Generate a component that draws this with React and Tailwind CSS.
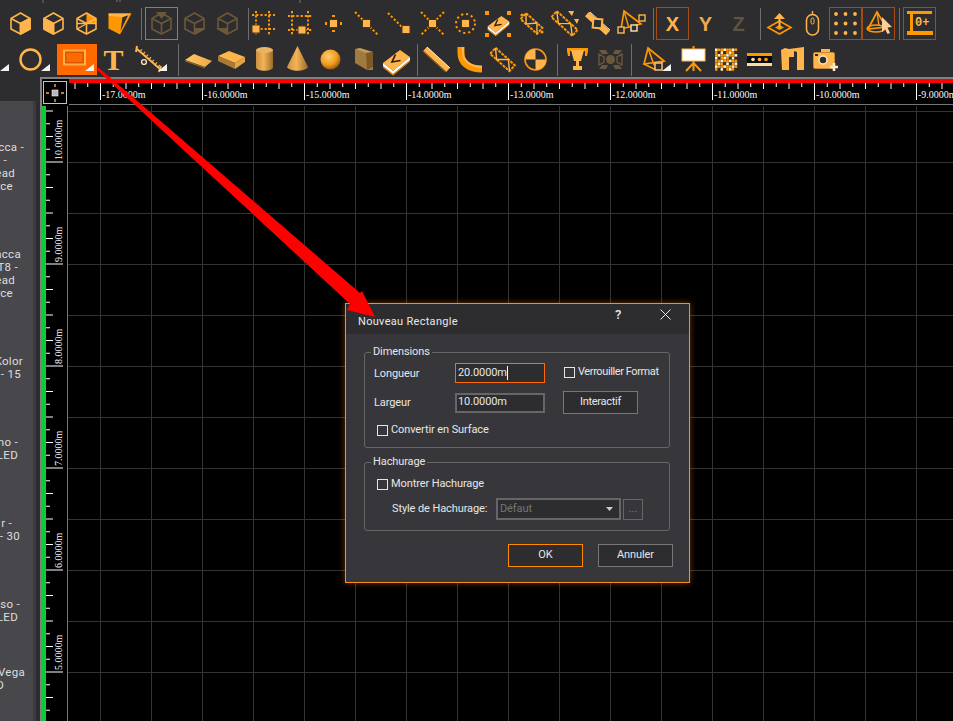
import React from 'react';

const L = '#ffb54c';
const O = '#ff9800';
const Dim = '#6b5838';

function Svg({ children, size = 33 }) {
  return (
    <svg width={size} height={size} viewBox="0 0 33 33" className="shrink-0" fill="none">
      {children}
    </svg>
  );
}

function Sq({ cx = 16.5, cy = 16.5, s = 8, fill = L }) {
  return <rect x={cx - s / 2} y={cy - s / 2} width={s} height={s} fill={fill} stroke="#4a3414" strokeWidth="1" />;
}

function Dots({ x1, y1, x2, y2, w = 2 }) {
  return <line x1={x1} y1={y1} x2={x2} y2={y2} stroke={O} strokeWidth={w} strokeDasharray="2.2 2" />;
}

function Cube({ left, right, color = L, w = 1.6 }) {
  return (
    <g stroke={color} strokeWidth={w} strokeLinejoin="round">
      {left && <polygon points="7,11.5 16.5,16.5 16.5,27 7,22" fill={color} />}
      {right && <polygon points="26,11.5 16.5,16.5 16.5,27 26,22" fill={color} />}
      <polygon points="16.5,6 26,11.5 26,22 16.5,27 7,22 7,11.5" />
      <polyline points="7,11.5 16.5,16.5 26,11.5" />
      <line x1="16.5" y1="16.5" x2="16.5" y2="27" />
    </g>
  );
}

const CubeRight = () => <Svg><Cube right /></Svg>;
const CubeLeft = () => <Svg><Cube left /></Svg>;
const CubeWire = () => (
  <Svg>
    <polygon points="16.5,6 26,11.5 26,16.5 16.5,16.5" fill={O} />
    <Cube />
    <line x1="7" y1="22" x2="26" y2="11.5" stroke={L} strokeWidth="1.4" />
    <line x1="7" y1="16.5" x2="26" y2="16.5" stroke={L} strokeWidth="1.4" />
  </Svg>
);
const CubeSolid = () => (
  <Svg>
    <polygon points="5.5,6.5 28.5,6.5 17,27.5 5.5,21.5" fill={O} />
    <polygon points="25,8.5 17.5,24 19.5,10" fill="#2d2d30" />
    <polygon points="5.5,6.5 28.5,6.5 19.5,10 6,9" fill={L} />
  </Svg>
);
const CubeTop = () => (
  <Svg>
    <Cube color={Dim} />
    <polygon points="11,5 22,5 16.5,12" fill={Dim} />
  </Svg>
);
const CubeFront = () => (
  <Svg>
    <Cube color={Dim} />
    <polygon points="17,21 28,21 17,28" fill={Dim} />
  </Svg>
);
const CubeBack = () => (
  <Svg>
    <g transform="translate(33 0) scale(-1 1)">
      <Cube color={Dim} />
      <polygon points="17,21 28,21 17,28" fill={Dim} />
    </g>
  </Svg>
);

const HandleA = () => (
  <Svg>
    <Dots x1="6" y1="8" x2="29" y2="8" />
    <Dots x1="10" y1="4" x2="10" y2="29" />
    <Dots x1="23" y1="4" x2="23" y2="29" />
    <Dots x1="6" y1="22" x2="29" y2="22" />
    <Sq cx="10" cy="22" s="8" />
  </Svg>
);
const HandleB = () => (
  <Svg>
    <Dots x1="4" y1="9" x2="28" y2="9" />
    <Dots x1="8" y1="4" x2="8" y2="29" />
    <Dots x1="24" y1="4" x2="24" y2="29" />
    <Dots x1="4" y1="23" x2="28" y2="23" />
    <Sq cx="18" cy="23" s="8" />
  </Svg>
);
const HandleCenter = () => (
  <Svg>
    <Sq />
    <rect x="15" y="8" width="3" height="2" fill={O} />
    <rect x="15" y="23" width="3" height="2" fill={O} />
    <rect x="8" y="15" width="2" height="3" fill={O} />
    <rect x="23" y="15" width="2" height="3" fill={O} />
  </Svg>
);
const HandleDiag = () => (
  <Svg>
    <Dots x1="5" y1="5" x2="28" y2="28" />
    <Sq />
  </Svg>
);
const HandleEnd = () => (
  <Svg>
    <Dots x1="5" y1="6" x2="20" y2="21" />
    <Sq cx="23" cy="22.5" />
  </Svg>
);
const HandleX = () => (
  <Svg>
    <Dots x1="5" y1="5" x2="28" y2="28" />
    <Dots x1="28" y1="5" x2="5" y2="28" />
    <Sq />
  </Svg>
);
const HandleRing = () => (
  <Svg>
    <circle cx="16.5" cy="16.5" r="9.5" stroke={O} strokeWidth="2" strokeDasharray="2.2 2.8" />
    <Sq />
  </Svg>
);

function BookShape() {
  return (
    <g>
      <polygon points="3,20 20,7 30,14 13,28" fill={L} />
      <polygon points="3,20 13,28 30,14 30,17 13,31 3,23" fill="#fff" />
      <polygon points="3,23 13,31 30,17 30,18.5 13,32.5 3,24.5" fill={O} />
      <path d="M15.5 11.5 L12 19 L20.5 17.5" stroke="#2a2010" strokeWidth="1.7" />
    </g>
  );
}
const Book = () => <Svg><BookShape /></Svg>;
const BookHandles = () => (
  <Svg>
    <g transform="translate(3.3 3.3) scale(0.8)"><BookShape /></g>
    <rect x="3" y="4" width="4" height="4" fill={O} />
    <rect x="25" y="4" width="4" height="4" fill={O} />
    <rect x="3" y="26" width="4" height="4" fill={O} />
    <rect x="25" y="26" width="4" height="4" fill={O} />
  </Svg>
);

function TrussShape({ len = 13 }) {
  return (
    <g transform="rotate(42 16.5 16.5)">
      <rect x={16.5 - len} y="12.5" width={len * 2} height="8" stroke={O} strokeWidth="2" strokeDasharray="3 1" />
      <path d={`M${16.5 - len} 12.5 L${16.5 - len / 3} 20.5 L${16.5 + len / 3} 12.5 L${16.5 + len} 20.5`} stroke={L} strokeWidth="1.4" />
    </g>
  );
}
const TrussDots = () => (
  <Svg>
    <TrussShape len={11} />
    <circle cx="7" cy="8" r="1.6" fill={O} />
    <circle cx="27" cy="25" r="1.6" fill={O} />
  </Svg>
);
const TrussArrows = () => (
  <Svg>
    <TrussShape len={14} />
    <polygon points="20,4 26,4 24,9" fill={L} />
    <polygon points="26,12 31,12 29,17" fill={L} />
  </Svg>
);
const BeamDiamond = () => (
  <Svg>
    <line x1="6" y1="7" x2="27" y2="26" stroke={L} strokeWidth="6" />
    <line x1="9" y1="5" x2="29" y2="23" stroke="#fff2c8" strokeWidth="1" />
    <rect x="12" y="12" width="9" height="9" fill="#2d2d30" stroke={L} strokeWidth="2" transform="rotate(5 16.5 16.5)" />
  </Svg>
);
const PyramidNodes = () => (
  <Svg>
    <polygon points="10,4 27,17 7,22" stroke={O} strokeWidth="1.6" />
    <line x1="10" y1="4" x2="15" y2="21" stroke={O} strokeWidth="1.4" />
    <rect x="4" y="20" width="6" height="6" fill="#2d2d30" stroke={L} strokeWidth="1.4" />
    <rect x="17" y="18" width="6" height="6" fill="#2d2d30" stroke="#ffe0b0" strokeWidth="1.4" />
    <rect x="25" y="8" width="6" height="6" fill="#2d2d30" stroke={L} strokeWidth="1.4" />
  </Svg>
);
const MoveUp = () => (
  <Svg>
    <polygon points="16.5,14 28,20.5 16.5,27 5,20.5" stroke={O} strokeWidth="1.6" />
    <polygon points="12,20.5 16.5,18 21,20.5 16.5,23" fill={O} />
    <polygon points="16.5,6 22,12 11,12" fill={L} />
    <line x1="16.5" y1="11" x2="16.5" y2="20" stroke={L} strokeWidth="2" />
  </Svg>
);
const Mouse = () => (
  <Svg>
    <rect x="10.5" y="7.5" width="12" height="20.5" rx="6" stroke={L} strokeWidth="1.5" />
    <line x1="16.5" y1="4" x2="16.5" y2="8" stroke={L} strokeWidth="1.4" />
    <rect x="15" y="11" width="3" height="6" rx="1.5" stroke={L} strokeWidth="1" />
  </Svg>
);
const DotGrid = () => (
  <Svg>
    {[7, 16.5, 26].map((y) =>
      [7, 16.5, 26].map((x) => <circle key={`${x}-${y}`} cx={x} cy={y} r="1.9" fill={L} />)
    )}
  </Svg>
);
const PyramidCursor = () => (
  <Svg>
    <polygon points="15,5 24,20 6,22" stroke={O} strokeWidth="1.7" />
    <ellipse cx="14" cy="21.5" rx="9" ry="3.5" stroke={O} strokeWidth="1.4" />
    <line x1="15" y1="5" x2="17" y2="19" stroke={O} strokeWidth="1.4" />
    <polygon points="20,10 30,20 25.5,20.5 28,26 25.5,27 23,22 20,25" fill="#ffcf9a" />
  </Svg>
);
const Counter = () => (
  <Svg>
    <rect x="4" y="4" width="25" height="3" fill={O} />
    <rect x="4" y="24" width="26" height="4" fill={O} />
    <rect x="7" y="7" width="3" height="17" fill={O} />
    <text x="12" y="19" fill={L} fontSize="12" fontWeight="700" fontFamily="Liberation Mono, monospace">0+</text>
  </Svg>
);
const Ring = () => (
  <Svg><circle cx="16.5" cy="16.5" r="10" stroke={L} strokeWidth="2.4" /></Svg>
);
const RectTool = () => (
  <svg width="40" height="31" viewBox="0 0 40 31" fill="none">
    <rect x="7.5" y="7" width="20" height="13" stroke={L} strokeWidth="1.4" />
    <rect x="8.8" y="8.2" width="17.4" height="10.6" fill="#ff6a00" stroke="#c74e00" strokeWidth="1" />
    <rect x="6.5" y="6" width="22" height="15" stroke="#ffae55" strokeWidth="1" />
  </svg>
);
const Measure = () => (
  <Svg>
    <line x1="5" y1="6" x2="28" y2="26" stroke={L} strokeWidth="2" />
    {[0, 1, 2, 3, 4, 5, 6].map((i) => (
      <line key={i} x1={8 + i * 3} y1={8.6 + i * 2.6} x2={10 + i * 3} y2={6.4 + i * 2.6} stroke={L} strokeWidth="1.2" />
    ))}
    <circle cx="12" cy="19" r="2.4" stroke="#ffe0b0" strokeWidth="1.4" />
    <line x1="5" y1="3" x2="4" y2="9" stroke={L} strokeWidth="2" />
    <line x1="29" y1="23" x2="27" y2="29" stroke={L} strokeWidth="2" />
  </Svg>
);
const Plate = () => (
  <Svg>
    <polygon points="3,17 12,11 30,18 23,24" fill="url(#plate)" />
    <polygon points="3,17 23,24 23,25.5 3,18.5" fill="#8a6426" />
  </Svg>
);
const Slab = () => (
  <Svg>
    <polygon points="3,13 14,8 30,14 20,20" fill={L} />
    <polygon points="3,13 20,20 20,26 3,18" fill="#a77b31" />
    <polygon points="20,20 30,14 30,19 20,26" fill="#e3a347" />
  </Svg>
);
const Cylinder = () => (
  <Svg>
    <path d="M8 7 V24 C8 29 25 29 25 24 V7 Z" fill="url(#cyl)" />
    <ellipse cx="16.5" cy="7" rx="8.5" ry="3" fill="#e9b465" />
  </Svg>
);
const Cone = () => (
  <Svg>
    <path d="M16.5 3 L27 24 C24 29 9 29 6 24 Z" fill="url(#cyl)" />
  </Svg>
);
const Sphere = () => (
  <Svg><circle cx="16.5" cy="16.5" r="10" fill="url(#sph)" /></Svg>
);
const Wall = () => (
  <Svg>
    <polygon points="8,6 26,9 26,27 20,27 8,20" fill="#a07a3f" />
    <polygon points="8,6 13,5 26,9 19,10" fill="#c59a57" />
    <polygon points="19,10 26,9 26,24 20,27" fill="#7b5a28" />
  </Svg>
);
const BeamLine = () => (
  <Svg>
    <line x1="5" y1="6" x2="28" y2="27" stroke={L} strokeWidth="6" />
    <line x1="7" y1="4" x2="30" y2="25" stroke="#ffe8bc" strokeWidth="1" />
    <line x1="3" y1="8" x2="26" y2="29" stroke="#8a5e18" strokeWidth="1.2" />
  </Svg>
);
const BeamCurve = () => (
  <Svg>
    <path d="M8 4 V10 C8 20 16 26 29 26" stroke={O} strokeWidth="7" />
    <path d="M10 4 V10 C10 18 18 24 29 24" stroke={L} strokeWidth="2" />
  </Svg>
);
const Quadrants = () => (
  <Svg>
    <circle cx="16.5" cy="16.5" r="10.5" stroke={O} strokeWidth="1.6" />
    <path d="M16.5 6 A10.5 10.5 0 0 0 6 16.5 H16.5 Z" fill={L} />
    <path d="M16.5 16.5 H27 A10.5 10.5 0 0 1 16.5 27 Z" fill={L} />
  </Svg>
);
const Trophy = () => (
  <Svg>
    <rect x="6" y="5" width="21" height="3" fill={O} />
    <path d="M6 8 H9 V13 H7 Z M27 8 H24 V13 H26 Z" fill={O} />
    <path d="M10 7 H23 L20 18 H13 Z" fill={L} />
    <rect x="15" y="18" width="3" height="5" fill={L} />
    <rect x="12" y="23" width="9" height="4" fill={L} />
  </Svg>
);
const SpotDim = () => (
  <Svg>
    <circle cx="16.5" cy="16.5" r="4.5" fill={Dim} />
    <path d="M5 7 H12 L14 11 H8 Z M28 7 H21 L19 11 H25 Z M5 26 H12 L14 22 H8 Z M28 26 H21 L19 22 H25 Z" fill={Dim} />
    <path d="M5 11 L10 14 V19 L5 22 Z M28 11 L23 14 V19 L28 22 Z" stroke={Dim} strokeWidth="1.4" />
  </Svg>
);
const PyramidSquare = () => (
  <Svg>
    <polygon points="10,5 26,18 6,21" stroke={O} strokeWidth="1.7" />
    <line x1="10" y1="5" x2="16" y2="22" stroke={O} strokeWidth="1.5" />
    <path d="M6 21 L16 26 L26 18" stroke={O} strokeWidth="1.5" />
    <rect x="17" y="20" width="7" height="7" fill="#2d2d30" stroke="#ffc070" strokeWidth="1.5" />
  </Svg>
);
const Easel = () => (
  <Svg>
    <rect x="5" y="6" width="23" height="12" fill="#fff" stroke={L} strokeWidth="1" />
    <rect x="15.5" y="3" width="2" height="3" fill={O} />
    <path d="M16.5 18 V28 M16.5 20 L9 28 M16.5 20 L24 28" stroke={O} strokeWidth="2" />
  </Svg>
);
const Mesh = () => (
  <Svg>
    {[0, 1, 2, 3, 4, 5, 6, 7].map((y) =>
      [0, 1, 2, 3, 4, 5, 6, 7].map((x) => (
        <rect
          key={`${x}-${y}`}
          x={5 + x * 2.8}
          y={5.5 + y * 2.8}
          width="2.6"
          height="2.6"
          fill={(x + y) % 3 === 0 ? '#fff2d6' : (x * y) % 2 === 0 ? O : '#3a2a12'}
        />
      ))
    )}
  </Svg>
);
const LedStrip = () => (
  <Svg>
    <rect x="4" y="10" width="25" height="3" fill={O} />
    <rect x="4" y="13" width="25" height="7" fill="#0a0a0a" />
    <rect x="4" y="20" width="25" height="3" fill="#ffd9a0" />
    <circle cx="10" cy="16.5" r="1.8" fill="#ffe3b0" />
    <circle cx="16.5" cy="16.5" r="1.8" fill={L} />
    <circle cx="23" cy="16.5" r="1.8" fill={O} />
  </Svg>
);
const Arch = () => (
  <Svg>
    <path d="M5 7 L9 5 L13 6 V27 H6 Z" fill={L} />
    <path d="M13 6 L28 4 V27 H21 V9 L18 8 V14 H13 Z" fill={L} />
  </Svg>
);
const Camera = () => (
  <Svg>
    <rect x="4" y="9" width="22" height="17" rx="2" fill={L} stroke="#3a2a12" strokeWidth="0.6" />
    <rect x="12" y="6" width="9" height="3" fill={L} />
    <circle cx="14" cy="17" r="4" fill="#2d2d30" stroke="#ffe6c0" strokeWidth="1.5" />
    <rect x="6" y="11" width="3" height="2" fill="#2d2d30" />
    <path d="M25 20 V28 M21 24 H29" stroke="#ffe9cc" strokeWidth="2.6" />
  </Svg>
);

function B({ children, boxed, grey }) {
  return (
    <div
      className={
        'relative w-[33px] h-[33px] shrink-0 flex items-center justify-center ' +
        (boxed ? 'border border-[#a8490f] ' : '') +
        (grey ? 'border border-[#808080] ' : '')
      }
    >
      {children}
    </div>
  );
}

function Corner({ className }) {
  return (
    <svg width="9" height="7" viewBox="0 0 9 7" className={'absolute ' + className}>
      <polygon points="9,0 9,7 0,7" fill="#f2f2f2" />
    </svg>
  );
}

function Sep({ className = '' }) {
  return <div className={'w-px h-[32px] bg-[#6e6e6e] shrink-0 ' + className} />;
}

function Letter({ children, color }) {
  return (
    <span className={'text-[20px] leading-none font-bold font-["Liberation_Sans",sans-serif] ' + color}>{children}</span>
  );
}

const TrussShapeIcon = () => <Svg><TrussShape len={13} /></Svg>;

function ToolbarTop() {
  return (
    <div className="flex items-center h-[33px] pl-[4px] mt-[3px]">
      <B><CubeRight /></B>
      <B><CubeLeft /></B>
      <B><CubeWire /></B>
      <B><CubeSolid /></B>
      <Sep className="ml-[5px]" />
      <div className="ml-[3px]"><B grey><CubeTop /></B></div>
      <B><CubeFront /></B>
      <B><CubeBack /></B>
      <Sep className="ml-[4px]" />
      <div className="w-[26px] flex justify-center"><HandleA /></div>
      <div className="ml-[9px]"><B><HandleB /></B></div>
      <B><HandleCenter /></B>
      <B><HandleDiag /></B>
      <B><HandleEnd /></B>
      <B><HandleX /></B>
      <B><HandleRing /></B>
      <B><BookHandles /></B>
      <B><TrussDots /></B>
      <B><TrussArrows /></B>
      <B><BeamDiamond /></B>
      <B><PyramidNodes /></B>
      <Sep className="ml-[6px]" />
      <div className="ml-[2px]"><B boxed><Letter color="text-[#ffb54c]">X</Letter></B></div>
      <B><Letter color="text-[#f0a94a]">Y</Letter></B>
      <B><Letter color="text-[#5f5340]">Z</Letter></B>
      <Sep className="ml-[5px]" />
      <div className="ml-[2px]"><B><MoveUp /></B></div>
      <B><Mouse /></B>
      <B boxed><DotGrid /></B>
      <B boxed><PyramidCursor /></B>
      <Sep className="ml-[4px]" />
      <div className="ml-[3px]"><B boxed><Counter /></B></div>
    </div>
  );
}

function ToolbarBottom() {
  return (
    <div className="flex items-center h-[33px] mt-[3px]">
      <div className="relative w-[14px] h-[33px]"><Corner className="left-0 bottom-[5px]" /></div>
      <B><Ring /><Corner className="right-[-3px] bottom-[5px]" /></B>
      <div className="relative ml-[10px] w-[40px] h-[31px] bg-[#ff6a00] flex items-center justify-center">
        <RectTool />
        <Corner className="right-[3px] bottom-[4px]" />
      </div>
      <B>
        <span className="text-[30px] leading-none font-bold text-[#ffb54c] font-['Liberation_Serif',serif]">T</span>
      </B>
      <div className="ml-[2px]"><B><Measure /><Corner className="right-[-2px] bottom-[5px]" /></B></div>
      <Sep className="ml-[13px]" />
      <div className="ml-[3px]"><B><Plate /></B></div>
      <B><Slab /></B>
      <B><Cylinder /></B>
      <B><Cone /></B>
      <B><Sphere /></B>
      <B><Wall /></B>
      <B><Book /></B>
      <Sep className="ml-[4px]" />
      <div className="ml-[2px]"><B><BeamLine /></B></div>
      <B><BeamCurve /></B>
      <B><TrussShapeIcon /></B>
      <B><Quadrants /></B>
      <Sep className="ml-[5px]" />
      <div className="ml-[3px]"><B><Trophy /></B></div>
      <B><SpotDim /></B>
      <Sep className="ml-[4px]" />
      <div className="ml-[6px]"><B><PyramidSquare /><Corner className="right-[0px] bottom-[5px]" /></B></div>
      <div className="ml-[6px]"><B><Easel /></B></div>
      <B><Mesh /></B>
      <B><LedStrip /></B>
      <B><Arch /></B>
      <B><Camera /></B>
    </div>
  );
}

function SidePanel() {
  const groups = [
    { className: 'mt-[40px]', lines: [['acca -', 'w-[24px]'], ['-', 'w-[7px]'], ['ead', 'w-[15px]'], ['rce', 'w-[13px]']] },
    { className: 'mt-[55px]', lines: [['acca', 'w-[21px]'], ['T8 -', 'w-[18px]'], ['ead', 'w-[15px]'], ['rce', 'w-[13px]']] },
    { className: 'mt-[55px]', lines: [['Kolor', 'w-[23px]'], ['- 15', 'w-[21px]']] },
    { className: 'mt-[55px]', lines: [['no -', 'w-[18px]'], ['LED', 'w-[18px]']] },
    { className: 'mt-[55px]', lines: [['r -', 'w-[12px]'], ['- 30', 'w-[20px]']] },
    { className: 'mt-[55px]', lines: [['so -', 'w-[20px]'], ['LED', 'w-[18px]']] },
    { className: 'mt-[42px]', lines: [['Vega', 'w-[25px]'], ['D', 'w-[4px]']] },
  ];
  return (
    <div className="w-[40px] shrink-0 pt-[24px] flex">
      <div className="w-[33px] bg-[#48484c] overflow-hidden text-[11.5px] leading-[13px] tracking-[0.3px] text-[#dedede] font-['Roboto',sans-serif]">
        {groups.map((g, i) => (
          <div key={i} className={g.className}>
            {g.lines.map(([text, w], j) => (
              <div key={j} className={'flex justify-end whitespace-nowrap ' + w}>{text}</div>
            ))}
          </div>
        ))}
      </div>
      <div className="w-[3px] bg-[#3c3c40]" />
    </div>
  );
}

function TopRuler() {
  const ticks = [];
  // 102px par metre, -17m tombe a x=32 dans le svg
  for (let i = -2; i < 72; i++) {
    const x = 32.5 + i * 12.75;
    const len = i % 8 === 0 ? 17 : i % 2 === 0 ? 6 : 4;
    ticks.push(<line key={i} x1={x} y1="4" x2={x} y2={4 + len} stroke="#fff" strokeWidth="1" />);
  }
  const labels = ['-17', '-16', '-15', '-14', '-13', '-12', '-11', '-10', '-9'];
  return (
    <svg width="885" height="27" viewBox="0 0 885 27" className="block">
      <rect x="1" y="0" width="884" height="4" fill="#ff0000" />
      {ticks}
      {labels.map((l, i) => (
        <text key={l} x={34 + i * 102} y="19" fill="#f4faff" fontSize="10" fontFamily="Liberation Serif, serif">{l}.0000m</text>
      ))}
      <rect x="1" y="25" width="884" height="1" fill="#777" />
    </svg>
  );
}

function LeftRuler() {
  const ticks = [];
  for (let i = 0; i < 50; i++) {
    const y = 5 + i * 12.75;
    const major = i % 8 === 4;
    const len = major ? 17 : i % 2 === 0 ? 7 : 4;
    ticks.push(<line key={i} x1="0" y1={y} x2={len} y2={y} stroke="#fff" strokeWidth="1" />);
  }
  const labels = ['10', '9', '8', '7', '6', '5'];
  return (
    <svg width="21" height="615" viewBox="0 0 21 615" className="block">
      {ticks}
      {labels.map((l, i) => {
        const y = 54 + i * 102;
        return (
          <text key={l} x="16" y={y} transform={`rotate(-90 16 ${y})`} fill="#f4faff" fontSize="10" fontFamily="Liberation Serif, serif">{l}.0000m</text>
        );
      })}
    </svg>
  );
}

function Check({ label, className = '', labelClass = '' }) {
  return (
    <div className={'flex items-center whitespace-nowrap ' + className}>
      <span className="w-[11px] h-[11px] border border-[#e4e4e4] shrink-0" />
      <span className={'ml-[3px] leading-[14px] ' + labelClass}>{label}</span>
    </div>
  );
}

function Btn({ children, active, className = '' }) {
  return (
    <div
      className={
        'w-[75px] h-[23px] flex items-center justify-center bg-[#2d2d30] border ' +
        (active ? 'border-[#ff8c00] ' : 'border-[#777] ') +
        className
      }
    >
      {children}
    </div>
  );
}

function Dialog() {
  return (
    <div className="absolute left-[345px] top-[303px] w-[345px] h-[280px] border border-[#ff8a1e] bg-[#37373b] shadow-[0_0_6px_rgba(255,120,0,0.45)] text-[#e6e6e6] text-[11px] tracking-[-0.1px] whitespace-nowrap font-['Roboto',sans-serif]">
      <div className="relative h-[30px] bg-[#2d2d30] flex items-end pl-[12px] pb-[5px]">
        <span className="text-[#e8e8e8] tracking-[0.3px] leading-[14px]">Nouveau Rectangle</span>
        <span className="absolute left-[269px] top-[3px] text-[13px] font-medium leading-[16px]">?</span>
        <svg width="11" height="11" viewBox="0 0 11 11" className="absolute left-[314px] top-[5px]">
          <path d="M0.5 0.5 L10.5 10.5 M10.5 0.5 L0.5 10.5" stroke="#e8e8e8" strokeWidth="1" />
        </svg>
      </div>
      <div className="pl-[18px] pr-[19px] pt-[11px]">
        <fieldset className="border border-[#666] rounded-[3px] pb-[10px]">
          <legend className="ml-[6px] px-[2px] leading-[14px]">Dimensions</legend>
          <div className="flex items-center mt-[4px] pl-[9px]">
            <span className="w-[81px] pt-[2px]">Longueur</span>
            <div className="w-[90px] h-[20px] border border-[#ff6a00] bg-[#2d2d30] flex items-center pl-[2px]">
              20.0000m<span className="w-px h-[14px] bg-white" />
            </div>
            <Check label="Verrouiller Format" labelClass="tracking-[-0.4px]" className="ml-[19px] -mt-[2px]" />
          </div>
          <div className="flex items-center mt-[8px] pl-[9px]">
            <span className="w-[81px] pt-[1px]">Largeur</span>
            <div className="w-[90px] h-[20px] border-2 border-[#666] bg-[#2d2d30] flex items-center pl-[1px]">10.0000m</div>
            <Btn className="ml-[18px] tracking-[-0.3px]">Interactif</Btn>
          </div>
          <Check label="Convertir en Surface" className="mt-[9px] ml-[12px]" />
        </fieldset>
        <fieldset className="border border-[#666] rounded-[3px] mt-[7px] pb-[10px]">
          <legend className="ml-[6px] px-[2px] leading-[14px]">Hachurage</legend>
          <Check label="Montrer Hachurage" className="mt-[8px] ml-[12px]" />
          <div className="flex items-center mt-[7px] pl-[27px]">
            <span className="w-[104px]">Style de Hachurage:</span>
            <div className="w-[125px] h-[22px] border-2 border-[#666] bg-[#2d2d30] flex items-center justify-between pl-[2px] pr-[6px] text-[#777]">
              Défaut
              <svg width="7" height="4" viewBox="0 0 7 4"><polygon points="0,0 7,0 3.5,4" fill="#ccc" /></svg>
            </div>
            <div className="ml-[2px] w-[20px] h-[21px] border border-[#666] flex items-center justify-center text-[#777] leading-[14px]">...</div>
          </div>
        </fieldset>
        <div className="flex justify-end gap-[15px] mt-[13px] -mr-[3px]">
          <Btn active>OK</Btn>
          <Btn>Annuler</Btn>
        </div>
      </div>
    </div>
  );
}

export default function App() {
  return (
    <div className="relative w-[953px] h-[721px] overflow-hidden bg-[#2d2d30] flex flex-col">
      <svg className="absolute w-0 h-0">
        <defs>
          <linearGradient id="plate" x1="0" y1="0" x2="1" y2="0">
            <stop offset="0" stopColor="#ffc766" />
            <stop offset="1" stopColor="#f0a644" />
          </linearGradient>
          <linearGradient id="cyl" x1="0" y1="0" x2="1" y2="0">
            <stop offset="0" stopColor="#c99140" />
            <stop offset="0.45" stopColor="#f4b355" />
            <stop offset="1" stopColor="#9a6c28" />
          </linearGradient>
          <radialGradient id="sph" cx="0.4" cy="0.35" r="0.7">
            <stop offset="0" stopColor="#ffcf70" />
            <stop offset="0.6" stopColor="#f09a20" />
            <stop offset="1" stopColor="#8a5208" />
          </radialGradient>
        </defs>
      </svg>

      <div className="h-[77px] shrink-0">
        <svg width="953" height="4" viewBox="0 0 953 4" className="block">
          <path d="M43 0 V3 M117 0 V2 M120 0 V2 M300 0 V3" stroke="#777" strokeWidth="1" />
        </svg>
        <ToolbarTop />
        <ToolbarBottom />
      </div>

      <div className="flex-1 flex min-h-0">
        <SidePanel />
        <div className="flex-1 min-w-0 flex flex-col border-l-2 border-t-2 border-[#808080] bg-black">
          <div className="flex h-[27px] shrink-0 bg-black">
            <div className="w-[26px] shrink-0 pl-[1px] pt-[2px]">
              <div className="w-[24px] h-[23px] border border-[#c4c4c4] flex items-center justify-center">
                <svg width="18" height="18" viewBox="0 0 18 18">
                  <rect x="6" y="6" width="6" height="6" fill="#b8b8b8" stroke="#eee" strokeWidth="0.6" />
                  <path d="M9 0 V3 M9 15 V18 M0 9 H3 M15 9 H18" stroke="#ffab40" strokeWidth="1.4" />
                </svg>
              </div>
            </div>
            <TopRuler />
          </div>
          <div className="flex-1 min-h-0 flex">
            <div className="w-[4px] shrink-0 bg-[#08cc38]" />
            <div className="w-[22px] shrink-0 border-r border-[#777] bg-black">
              <LeftRuler />
            </div>
            <div className="flex-1 bg-black bg-[linear-gradient(90deg,#333_1px,transparent_1px),linear-gradient(#333_1px,transparent_1px)] bg-[size:51px_51px] bg-[position:32px_5px]" />
          </div>
        </div>
      </div>

      <Dialog />

      <svg width="953" height="721" viewBox="0 0 953 721" className="absolute left-0 top-0 pointer-events-none">
        <polygon points="96,69 99,68 360,293 362,291 375,317 347,310 350,304" fill="#ff0000" />
      </svg>
    </div>
  );
}
